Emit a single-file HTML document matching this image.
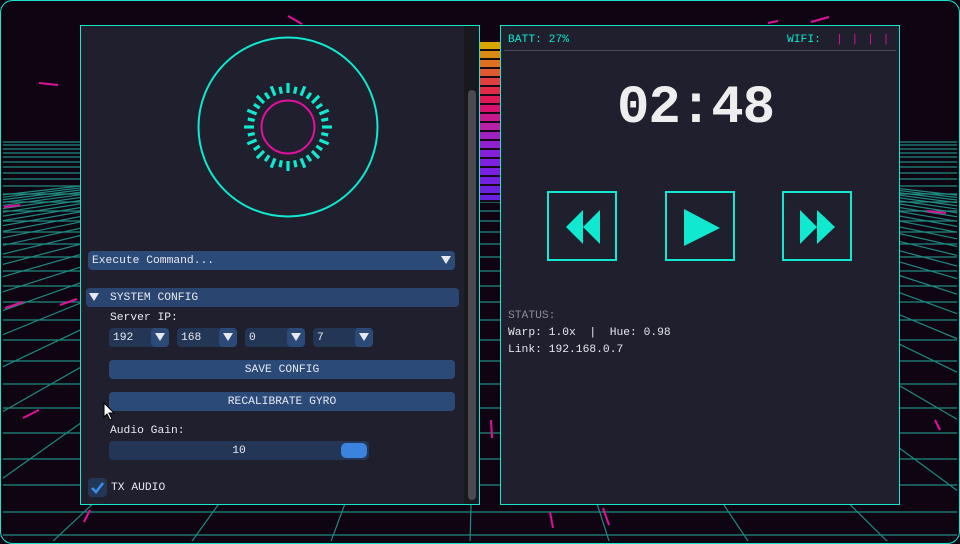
<!DOCTYPE html>
<html><head><meta charset="utf-8"><style>
*{margin:0;padding:0;box-sizing:border-box}
body{width:960px;height:544px;background:#0e0412;overflow:hidden;position:relative;font-family:"Liberation Mono",monospace;font-size:11.3px;color:#e8e8f0}
.a{position:absolute}
.panel{position:absolute;background:#1f1f2d;border:1px solid #17e6cc}
.bar{position:absolute;background:#2b4a78;border-radius:4px}
.t{position:absolute;white-space:pre;line-height:12px}
.dd{position:absolute;background:#2b4a78;border-radius:4px;width:18px;height:18px;top:0;right:0}
.dd:after{content:"";position:absolute;left:4px;top:5px;border-left:5px solid transparent;border-right:5px solid transparent;border-top:8px solid #e8e8f0}
.ip{position:absolute;top:328px;height:19px;width:60px;background:#243655;border-radius:4px}
.ip span{position:absolute;left:4px;top:4px}
.btn{position:absolute;width:70px;height:70px;border:2px solid #10e8d0}
</style></head><body>
<svg class="a" style="left:0;top:0" width="960" height="544">
<defs><clipPath id="cp"><rect x="3" y="140" width="954" height="401"/></clipPath></defs>
<g id="grid" stroke="#1f8a80" stroke-width="1.2" clip-path="url(#cp)"></g>
<rect x="0.5" y="0.5" width="959" height="543" rx="12" fill="none" stroke="#17e6cc"/>
<g stroke="#e0109a" stroke-width="2">
<line x1="288" y1="16" x2="302" y2="24"/><line x1="39" y1="83" x2="58" y2="85"/><line x1="768" y1="23" x2="778" y2="21"/><line x1="811" y1="22" x2="829" y2="17"/><line x1="4" y1="207" x2="20" y2="205"/><line x1="927" y1="211" x2="946" y2="213"/><line x1="550" y1="512" x2="553" y2="528"/><line x1="603" y1="508" x2="609" y2="525"/><line x1="84" y1="522" x2="90" y2="510"/><line x1="5" y1="308" x2="23" y2="302"/><line x1="60" y1="305" x2="77" y2="299"/><line x1="23" y1="418" x2="39" y2="410"/><line x1="491" y1="420" x2="492" y2="438"/><line x1="935" y1="420" x2="940" y2="430"/>
</g>
</svg>
<svg class="a" style="left:479px;top:40px" width="22" height="162">
<rect width="22" height="162" fill="#150a18"/>
<g>
<rect y="2" width="22" height="7" fill="#d6a800"/><rect y="11" width="22" height="7" fill="#d98a10"/><rect y="20" width="22" height="7" fill="#de7020"/><rect y="29" width="22" height="7" fill="#e05a30"/><rect y="38" width="22" height="7" fill="#e04040"/><rect y="47" width="22" height="7" fill="#e02a48"/><rect y="56" width="22" height="7" fill="#e01858"/><rect y="65" width="22" height="7" fill="#d81070"/><rect y="74" width="22" height="7" fill="#c81890"/><rect y="83" width="22" height="7" fill="#b820a8"/><rect y="92" width="22" height="7" fill="#a020c0"/><rect y="101" width="22" height="7" fill="#9020d0"/><rect y="110" width="22" height="7" fill="#8420d8"/><rect y="119" width="22" height="7" fill="#8020e0"/><rect y="128" width="22" height="7" fill="#7a20e0"/><rect y="137" width="22" height="7" fill="#7420e0"/><rect y="146" width="22" height="7" fill="#6e20e0"/><rect y="155" width="22" height="5" fill="#6a20e0"/>
</g></svg>

<div class="panel" style="left:80px;top:25px;width:400px;height:480px">
 <div class="a" style="left:383px;top:0;width:15px;height:478px;background:#18181f"></div>
 <div class="a" style="left:387px;top:64px;width:8px;height:410px;background:#4a4a50;border-radius:4px"></div>
</div>
<svg class="a" style="left:190px;top:30px" width="200" height="200">
<circle cx="98" cy="97" r="89.5" fill="none" stroke="#10e8d0" stroke-width="2"/>
<circle cx="98" cy="97" r="26.5" fill="none" stroke="#e010a0" stroke-width="2"/>
<g stroke="#10e8d0" stroke-width="3.2" id="tk"></g>
</svg>
<div class="bar" style="left:88px;top:251px;width:367px;height:19px"><span class="t" style="left:4px;top:4px">Execute Command...</span><div class="dd" style="height:19px"></div></div>
<div class="bar" style="left:86px;top:288px;width:373px;height:19px;background:#2a4570"><span class="a" style="left:3px;top:5px;border-left:5px solid transparent;border-right:5px solid transparent;border-top:8px solid #e8e8f0"></span><span class="t" style="left:24px;top:4px">SYSTEM CONFIG</span></div>
<span class="t" style="left:110px;top:312px">Server IP:</span>
<div class="ip" style="left:109px"><span>192</span><div class="dd" style="height:19px"></div></div>
<div class="ip" style="left:177px"><span>168</span><div class="dd" style="height:19px"></div></div>
<div class="ip" style="left:245px"><span>0</span><div class="dd" style="height:19px"></div></div>
<div class="ip" style="left:313px"><span>7</span><div class="dd" style="height:19px"></div></div>
<div class="bar" style="left:109px;top:360px;width:346px;height:19px;text-align:center"><span class="t" style="position:relative;top:4px">SAVE CONFIG</span></div>
<div class="bar" style="left:109px;top:392px;width:346px;height:19px;text-align:center"><span class="t" style="position:relative;top:4px">RECALIBRATE GYRO</span></div>
<svg class="a" style="left:103px;top:402px" width="14" height="20"><path d="M1 1 L1 15 L4 12 L7 18 L9 17 L6 11 L11 11 Z" fill="#fff" stroke="#000" stroke-width="1"/></svg>
<span class="t" style="left:110px;top:425px">Audio Gain:</span>
<div class="a" style="left:109px;top:441px;width:260px;height:19px;background:#243655;border-radius:4px;text-align:center"><span class="t" style="position:relative;top:4px">10</span><div class="a" style="left:232px;top:2px;width:26px;height:15px;background:#3a84e0;border-radius:5px"></div></div>
<div class="a" style="left:88px;top:478px;width:19px;height:19px;background:#243655;border-radius:4px"><svg width="19" height="19"><path d="M4 10 L8 14 L15 5" fill="none" stroke="#3a90f0" stroke-width="2.5"/></svg></div>
<span class="t" style="left:111px;top:482px">TX AUDIO</span>

<div class="panel" style="left:500px;top:25px;width:400px;height:480px"></div>
<span class="t" style="left:508px;top:34px;color:#10e8d0">BATT: 27%</span>
<span class="t" style="left:787px;top:34px;color:#10e8d0">WIFI:</span>
<span class="t" style="left:836px;top:34px;color:#e010a0;letter-spacing:1px">| | | |</span>
<div class="a" style="left:504px;top:50px;width:392px;height:1px;background:#4a4a5a"></div>
<div class="t" style="left:617px;top:86px;font-size:54px;line-height:46px;font-weight:bold;color:#eeeeee;letter-spacing:-1px">02:48</div>
<div class="btn" style="left:547px;top:191px"><svg width="66" height="66"><path d="M17 34 L34 17 L34 51 Z M34 34 L51 17 L51 51 Z" fill="#10e8d0"/></svg></div>
<div class="btn" style="left:665px;top:191px"><svg width="66" height="66"><path d="M17 16 L53 35 L17 53 Z" fill="#10e8d0"/></svg></div>
<div class="btn" style="left:782px;top:191px"><svg width="66" height="66"><path d="M16 17 L33 34 L16 51 Z M33 17 L51 34 L33 51 Z" fill="#10e8d0"/></svg></div>
<span class="t" style="left:508px;top:310px;color:#8a8a95">STATUS:</span>
<span class="t" style="left:508px;top:327px">Warp: 1.0x  |  Hue: 0.98</span>
<span class="t" style="left:508px;top:344px">Link: 192.168.0.7</span>
<script>
var g=document.getElementById('tk'),s='';
for(var i=0;i<32;i++){var a=i*Math.PI*2/32,r1=34,r2=(i%2==0)?44:41;
s+='<line x1="'+(98+r1*Math.cos(a)).toFixed(1)+'" y1="'+(97+r1*Math.sin(a)).toFixed(1)+'" x2="'+(98+r2*Math.cos(a)).toFixed(1)+'" y2="'+(97+r2*Math.sin(a)).toFixed(1)+'"/>';}
g.innerHTML=s;
var gr=document.getElementById('grid'),q='';
var hy=[142,145,149,153,157,162,167,173,179,186,194,202,211,221,232,244,257,271,286,302,320,340,361,384,408,433,459,485,512,535];
hy.forEach(function(y){q+='<line x1="0" y1="'+y+'" x2="960" y2="'+y+'"/>';});
for(var k=-25;k<=25;k++){var bx=470+k*140;q+='<line x1="480" y1="140" x2="'+bx+'" y2="544"/>';}
gr.innerHTML=q;
</script>
</body></html>
